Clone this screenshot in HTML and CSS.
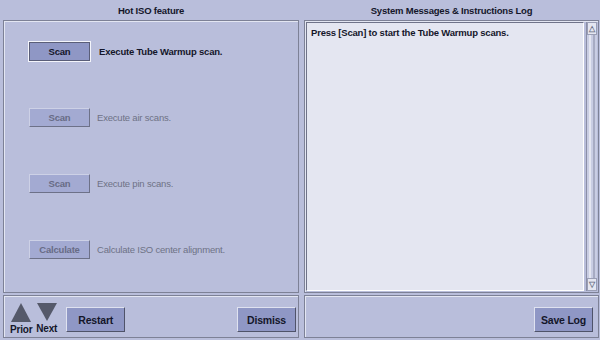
FILE: index.html
```html
<!DOCTYPE html>
<html lang="en">
<head>
    <meta charset="UTF-8">
    <title>Hot ISO feature</title>
    <link rel="stylesheet" href="styles.css">
</head>
<body>
<div class="app">
    <div class="title">Hot ISO feature</div>
    <div class="title">System Messages &amp; Instructions Log</div>

    <div class="panel steps">
        <div class="step">
            <button class="btn focus" type="button">Scan</button>
            <span class="label">Execute Tube Warmup scan.</span>
        </div>
        <div class="step off">
            <button class="btn" type="button" disabled>Scan</button>
            <span class="label">Execute air scans.</span>
        </div>
        <div class="step off">
            <button class="btn" type="button" disabled>Scan</button>
            <span class="label">Execute pin scans.</span>
        </div>
        <div class="step off">
            <button class="btn" type="button" disabled>Calculate</button>
            <span class="label">Calculate ISO center alignment.</span>
        </div>
    </div>

    <div class="panel log">
        <div class="log__text">Press [Scan] to start the Tube Warmup scans.</div>
        <div class="scroll">
            <span class="scroll__arrow">&#9651;</span>
            <span class="scroll__track"></span>
            <span class="scroll__arrow">&#9661;</span>
        </div>
    </div>

    <div class="panel bar">
        <div class="nav">
            <div class="nav__item">
                <svg width="20" height="19" viewBox="0 0 20 19"><polygon points="10,0 20,19 0,19" fill="#55596a"/></svg>
                <span>Prior</span>
            </div>
            <div class="nav__item">
                <svg width="20" height="18" viewBox="0 0 20 18"><polygon points="0,0 20,0 10,18" fill="#55596a"/></svg>
                <span>Next</span>
            </div>
        </div>
        <button class="btn big" type="button">Restart</button>
        <button class="btn big push" type="button">Dismiss</button>
    </div>

    <div class="panel bar bar--right">
        <button class="btn big push" type="button">Save Log</button>
    </div>
</div>
</body>
</html>
```

FILE: styles.css
```css
body {
    margin: 0;
    background-color: #b9bedb;
    font-family: "Liberation Sans", Arial, sans-serif;
    font-size: 9.5px;
    letter-spacing: -0.2px;
    font-weight: bold;
    color: #14162a;
}

.app {
    width: 600px;
    height: 340px;
    box-sizing: border-box;
    padding: 0 3px 2px 3px;
    display: grid;
    grid-template-columns: 296px 295px;
    grid-template-rows: 20px 273px 45px;
    column-gap: 5px;
}

.title {
    display: flex;
    align-items: center;
    justify-content: center;
    padding-top: 1px;
}

.panel {
    border: 1px solid #7d8196;
    box-shadow: inset 1px 1px 0 #e3e6f2;
    box-sizing: border-box;
}

/* left column */
.steps {
    padding: 21px 0 0 25px;
    display: flex;
    flex-direction: column;
    gap: 47px;
}

.step {
    display: flex;
    align-items: center;
    gap: 9px;
}

.btn {
    font-family: inherit;
    font-size: 9.5px;
    letter-spacing: -0.2px;
    font-weight: bold;
    color: #14162a;
    width: 61px;
    height: 19px;
    padding: 0;
    background-color: #8f97c5;
    border: 1px solid;
    border-color: #dfe2f0 #4f5369 #4f5369 #dfe2f0;
}

.btn.focus {
    outline: 1px solid #f4f5fb;
    border-color: #5a5e78;
}

.step.off .btn {
    background-color: #a3aad2;
    color: #686c86;
    border-color: #cdd1e6 #6d7188 #6d7188 #cdd1e6;
}

.step.off .label {
    color: #6e7286;
    font-weight: normal;
    margin-left: -2px;
}

/* right column */
.log {
    display: flex;
    padding: 1px;
}

.log__text {
    flex: 1;
    background-color: #e4e6f1;
    border: 1px solid;
    border-color: #6f7389 #ffffff #ffffff #6f7389;
    padding: 4px 4px;
}

.scroll {
    width: 10px;
    margin-left: 2px;
    display: flex;
    flex-direction: column;
    background-color: #c9cde3;
    border-left: 1px solid #8a8ea6;
}

.scroll__arrow {
    height: 11px;
    font-size: 8px;
    line-height: 11px;
    text-align: center;
    color: #6b6f86;
    background-color: #e4e6f1;
    border: 1px solid #9a9eb5;
}

.scroll__track {
    flex: 1;
    border-left: 2px solid #e4e6f1;
    border-right: 2px solid #a7abc3;
    margin: 0 2px;
}

/* bottom bars */
.bar {
    margin-top: 2px;
    display: flex;
    align-items: flex-end;
    padding: 0 2px 5px 6px;
    gap: 9px;
}

.bar--right {
    padding-right: 5px;
}

.btn.big {
    width: 59px;
    height: 25px;
    font-size: 10.5px;
}

.push {
    margin-left: auto;
}

.nav {
    display: flex;
    gap: 4px;
    align-self: flex-end;
    margin-bottom: -3px;
}

.nav__item {
    display: flex;
    flex-direction: column;
    align-items: center;
    font-size: 10px;
    gap: 2px;
}
```
